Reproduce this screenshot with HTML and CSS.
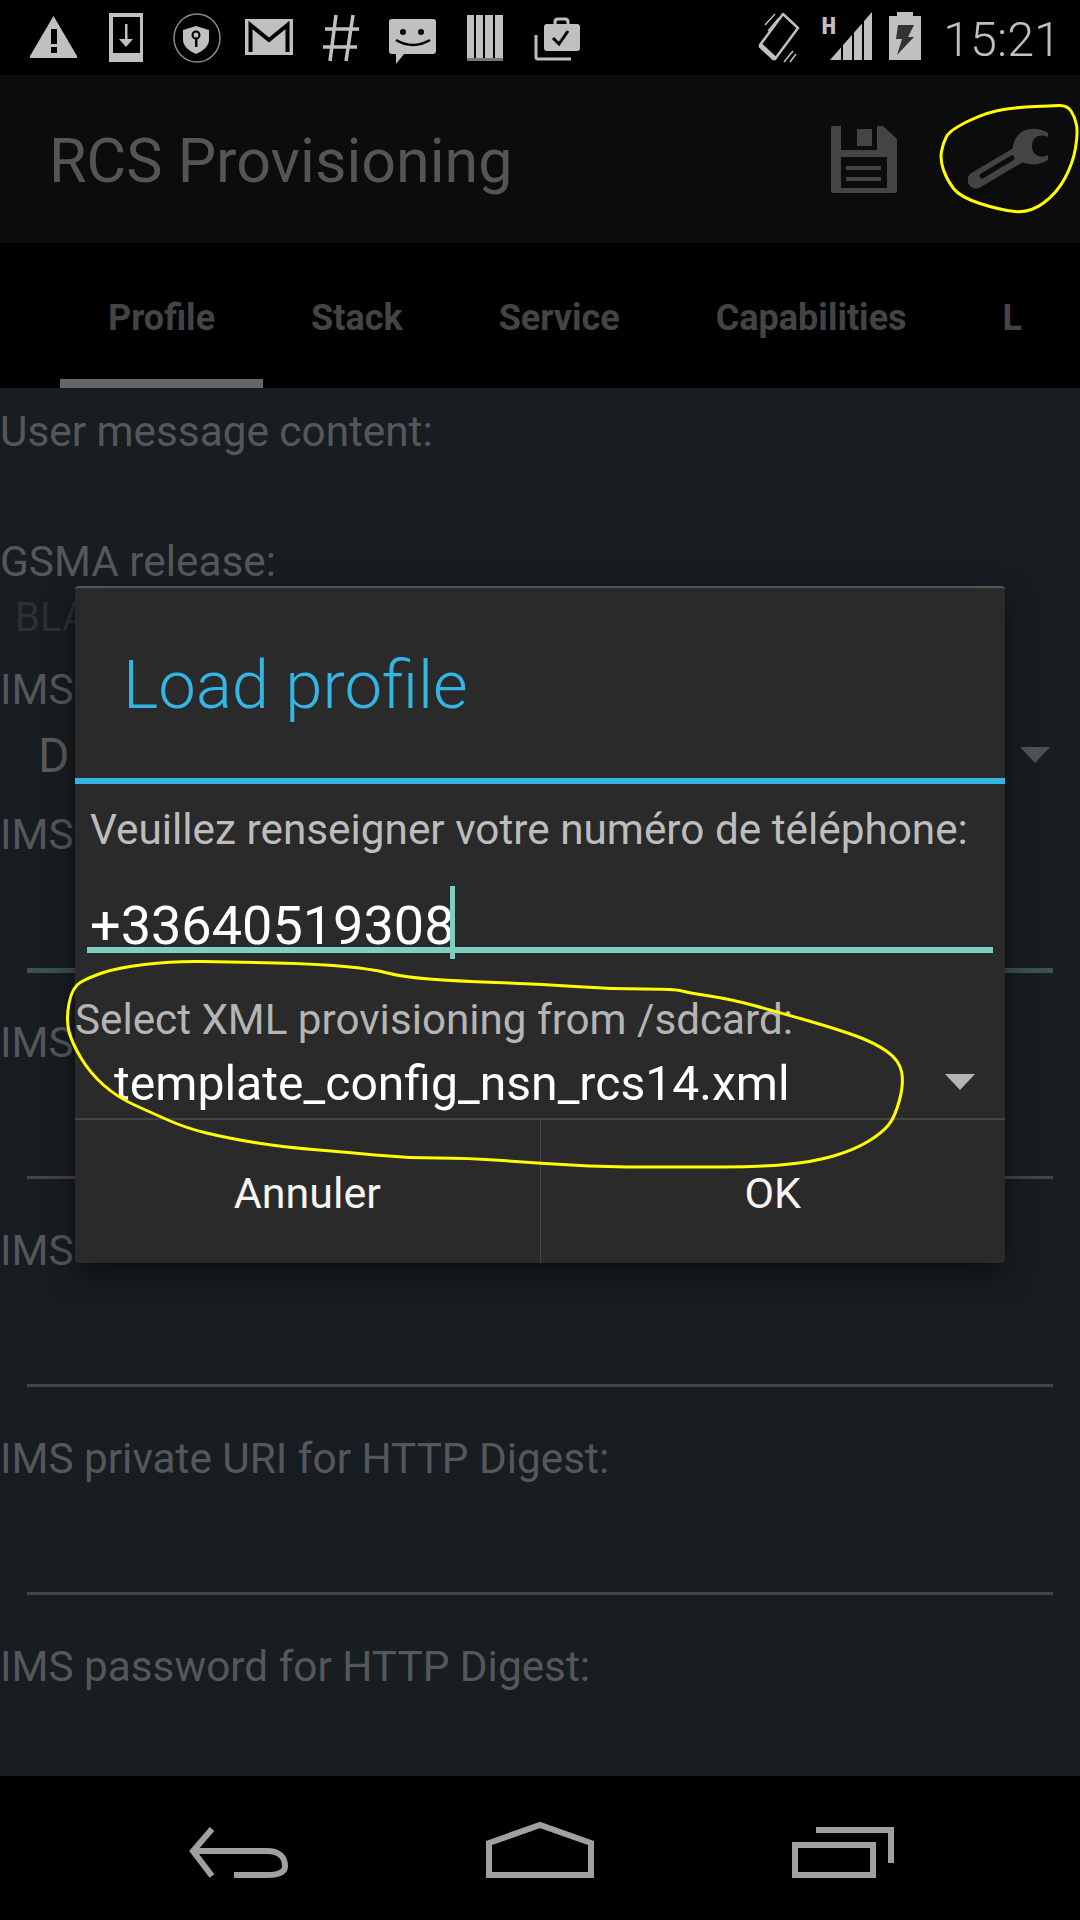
FILE: index.html
```html
<!DOCTYPE html>
<html>
  <head>
    <title>RCS Provisioning</title>
    <link rel="stylesheet" href="styles.css">
  </head>
  <body>
    <div class="screen">
      <div class="statusbar">
        <div class="notifs">
          <svg class="slot" viewBox="17 0 72 76"><polygon class="g" points="53.5,16 77,56 77,58 30,58 30,56"/><rect class="k" x="51" y="29" width="6" height="15"/><rect class="k" x="51" y="47" width="6" height="6"/></svg>
          <svg class="slot" viewBox="89 0 72 76"><rect class="g" x="109" y="13" width="34" height="49"/><rect class="k" x="113" y="17" width="27" height="36"/><rect class="g" x="125" y="24" width="2.5" height="18"/><polygon class="g" points="119,39 133,39 126,47"/></svg>
          <svg class="slot" viewBox="162 0 72 76"><ellipse cx="198" cy="38" rx="23" ry="24" fill="none" stroke="#8a8a8a" stroke-width="1.5"/><path class="g" d="M197 26 L210 30 V40 C210 46 204 51 197 54 C190 51 184 46 184 40 V30 Z"/><circle cx="197" cy="35" r="3.5" fill="none" stroke="#000" stroke-width="2"/><rect class="k" x="196" y="38" width="2.5" height="9"/></svg>
          <svg class="slot" viewBox="234 0 72 76"><rect class="g" x="246" y="19" width="48" height="36"/><path d="M251.5 52 V25 L270 40 L288.500 25 V52" fill="none" stroke="#000" stroke-width="4"/></svg>
          <svg class="slot" viewBox="306 0 72 76"><path d="M337 15 L331 61 M354 15 L347 61 M326 29 H360 M324 47 H358" fill="none" stroke="#c0c0c0" stroke-width="3.500"/></svg>
          <svg class="slot" viewBox="378 0 72 76"><path class="g" d="M393 19 H434 Q437 19 437 22 V51 Q437 54 434 54 H405 L397 64 V54 H393 Q390 54 390 51 V22 Q390 19 393 19 Z"/><circle class="k" cx="404" cy="32" r="3"/><circle class="k" cx="422" cy="32" r="3"/><path d="M397 40 Q414 50 431 40" fill="none" stroke="#000" stroke-width="2.500"/></svg>
          <svg class="slot" viewBox="450 0 72 76"><rect class="g" x="468" y="15" width="7" height="46"/><rect class="g" x="477" y="15" width="7" height="46"/><rect class="g" x="486" y="15" width="8" height="46"/><rect class="g" x="496" y="15" width="8" height="46"/><rect x="468" y="58" width="36" height="3" fill="#777"/></svg>
          <svg class="slot" viewBox="522 0 72 76"><path d="M537 35 V57 Q537 59 539 59 H572" fill="none" stroke="#c0c0c0" stroke-width="3"/><path d="M556 24 V22 Q556 19 559 19 H566 Q569 19 569 22 V24" fill="none" stroke="#c0c0c0" stroke-width="3"/><rect class="g" x="545" y="24" width="36" height="27" rx="3"/><path d="M554 38 L560 44 L569 31" fill="none" stroke="#000" stroke-width="3"/></svg>
        </div>
        <div class="sysicons">
          <svg class="vibrate" viewBox="758 0 42 76"><path d="M783 14 L798 28 L775 59 L760 45 Z" fill="none" stroke="#c0c0c0" stroke-width="2.500" stroke-linejoin="round"/><path d="M760 45 L775 59" stroke="#c0c0c0" stroke-width="5"/><path d="M765 25 L775 14 M768 31 L779 18 M784 62 L793 51 M790 62 L796 54" stroke="#c0c0c0" stroke-width="1.500"/></svg>
          <svg class="signal" viewBox="825 0 50 76"><text class="net" x="824" y="34">H</text><polygon class="g" points="833,60 875,12 875,60"/><rect class="k" x="844" y="10" width="2" height="52"/><rect class="k" x="855" y="10" width="2" height="52"/><rect class="k" x="865" y="10" width="2" height="52"/></svg>
          <svg class="battery" viewBox="892 0 32 76"><rect class="g" x="900" y="12" width="16" height="5"/><rect class="g" x="892" y="16" width="32" height="44"/><polygon points="901,25 917,25 911,37 917,37 900,55 905,39 899,39" fill="#333"/></svg>
          <span class="clock">15:21</span>
        </div>
      </div>

      <div class="actionbar">
        <span class="apptitle">RCS Provisioning</span>
        <svg class="save" viewBox="831 126 66 67"><path class="ic" d="M833 126 H883 L897 139 V191 Q897 193 895 193 H833 Q831 193 831 191 V128 Q831 126 833 126 Z"/><path class="bar" d="M841 126 H877 V150 H841 Z"/><rect class="ic" x="857" y="129" width="15" height="17"/><rect class="bar" x="841" y="157" width="46" height="31"/><rect class="ic" x="846" y="166" width="35" height="4"/><rect class="ic" x="846" y="177" width="35" height="4"/></svg>
        <svg class="wrench" viewBox="968 126 80 68"><path class="ic" d="M1048 134 C1036 127 1022 129 1016 139 C1012 146 1012 152 1014 157 L1022 163 C1030 167 1040 166 1048 161 L1048 156 C1040 160 1032 156 1032 147 C1032 138 1040 134 1048 138 Z"/><path d="M976 181 L1020 155" stroke="#444" stroke-width="17" stroke-linecap="round"/><path d="M982 177 L1012 159" stroke="#0c0c0c" stroke-width="5" stroke-linecap="round"/></svg>
      </div>

      <div class="tabs">
        <div class="tab active">Profile</div>
        <div class="tab">Stack</div>
        <div class="tab">Service</div>
        <div class="tab">Capabilities</div>
        <div class="tab">L</div>
      </div>

      <div class="content">
        <div class="label first">User message content:</div>
        <div class="label gsma">GSMA release:</div>
        <div class="spinner-bg small">BLA</div>
        <div class="label ims">IMS</div>
        <div class="spinner-bg">
          <span>D</span>
          <span class="arrow dim"></span>
        </div>
        <div class="label field-label">IMS</div>
        <div class="line focused"></div>
        <div class="label">IMS</div>
        <div class="line"></div>
        <div class="label">IMS</div>
        <div class="line"></div>
        <div class="label">IMS private URI for HTTP Digest:</div>
        <div class="line"></div>
        <div class="label">IMS password for HTTP Digest:</div>
      </div>

      <div class="navbar">
        <svg class="back" viewBox="190 1776 99 144"><path d="M213 1829 L194 1851 L213 1876 M194 1851 H268 C279 1851 286 1856 286 1866 C286 1873 279 1875 268 1875 H235" fill="none" stroke="#a0a0a0" stroke-width="6"/></svg>
        <svg class="home" viewBox="486 1776 108 144"><path d="M489 1875 V1843 L540 1825 L591 1843 V1875 Z" fill="none" stroke="#a0a0a0" stroke-width="6"/></svg>
        <svg class="recent" viewBox="792 1776 102 144"><rect x="795" y="1845" width="78" height="30" fill="none" stroke="#a0a0a0" stroke-width="6"/><path d="M816 1830 H891 V1863" fill="none" stroke="#a0a0a0" stroke-width="6"/></svg>
      </div>

      <div class="dialog">
        <div class="dialog-title">Load profile</div>
        <div class="dialog-msg">Veuillez renseigner votre numéro de téléphone:</div>
        <div class="phone">
          +33640519308
          <span class="cursor"></span>
        </div>
        <div class="select-label">Select XML provisioning from /sdcard:</div>
        <div class="select">
          <span class="select-value">template_config_nsn_rcs14.xml</span>
          <span class="arrow"></span>
        </div>
        <div class="buttons">
          <div class="btn">Annuler</div>
          <div class="btn">OK</div>
        </div>
      </div>

      <svg class="scribble" viewBox="0 0 1080 1920">
        <path d="M1035 106.500 Q1050 106 1058.500 105.500 Q1067 105 1071 111 Q1075 117 1076.500 125 Q1078 133 1075.500 148 Q1073 163 1065 178 Q1057 193 1043.500 203 Q1030 213 1015 211.500 Q1000 210 980 203.500 Q960 197 953.500 188.500 Q947 180 943.500 170 Q940 160 941.500 151.500 Q943 143 946.500 136.500 Q950 130 968.500 121 Q987 112 1003.500 109.500 Q1020 107 1035 106.500 Z"/>
        <path d="M69 1003.500 Q72 987 81 982 Q90 977 103.500 972.500 Q117 968 144.500 964.500 Q172 961 203 961.500 Q234 962 275.500 963 Q317 964 344.500 966.500 Q372 969 387.500 973 Q403 977 429 979 Q455 981 496 982.500 Q537 984 575 986.500 Q613 989 644 989 Q675 989 682 991 Q689 993 709.500 996 Q730 999 754 1005.500 Q778 1012 809 1021 Q840 1030 857.500 1036.500 Q875 1043 887 1051.500 Q899 1060 901.500 1071.500 Q904 1083 899.500 1100 Q895 1117 888.500 1125 Q882 1133 868 1141.500 Q854 1150 833.500 1156 Q813 1162 785.500 1164.500 Q758 1167 723.500 1167 Q689 1167 647.500 1167 Q606 1167 571.500 1165 Q537 1163 502.500 1160.500 Q468 1158 437 1158 Q406 1158 375 1155 Q344 1152 313 1149.500 Q282 1147 254.500 1142.500 Q227 1138 206.500 1133 Q186 1128 169 1120.500 Q152 1113 134.500 1105 Q117 1097 103.500 1085 Q90 1073 81 1058 Q72 1043 69 1031.500 Q66 1020 69 1003.500 Z"/>
      </svg>
    </div>
  </body>
</html>
```

FILE: styles.css
```css
* {
  box-sizing: border-box;
}

body {
  margin: 0;
  font-family: Roboto, "Noto Sans", sans-serif;
  background-color: #000;
}

svg {
  display: block;
  flex: none;
}

.g {
  fill: #c0c0c0;
}

.k {
  fill: #000;
}

.ic {
  fill: #444;
}

.bar {
  fill: #0c0c0c;
}

.screen {
  position: relative;
  width: 1080px;
  height: 1920px;
  overflow: hidden;
  display: flex;
  flex-direction: column;
}

/* status bar */
.statusbar {
  height: 75px;
  flex: none;
  display: flex;
  background-color: #000;
}

.notifs {
  display: flex;
  padding-left: 17px;
}

.slot {
  width: 72px;
  height: 76px;
}

.sysicons {
  margin-left: auto;
  padding-right: 19px;
  display: flex;
  align-items: flex-start;
}

.vibrate {
  width: 42px;
  height: 76px;
}

.signal {
  width: 50px;
  height: 76px;
  margin-left: 22px;
}

.net {
  font-family: "Liberation Mono", monospace;
  font-weight: bold;
  font-size: 26px;
  fill: #c0c0c0;
}

.battery {
  width: 32px;
  height: 76px;
  margin-left: 17px;
}

.clock {
  margin-left: 22px;
  color: #c0c0c0;
  font-size: 48.5px;
  font-weight: 300;
  line-height: 80px;
}

/* action bar */
.actionbar {
  height: 168px;
  flex: none;
  display: flex;
  align-items: center;
  padding-left: 49px;
  background-color: #0c0c0c;
}

.apptitle {
  padding-top: 3px;
  color: #555;
  font-size: 61px;
}

.save {
  width: 66px;
  height: 67px;
  margin-left: auto;
}

.wrench {
  width: 80px;
  height: 68px;
  margin-left: 71px;
  margin-right: 32px;
}

/* tabs */
.tabs {
  height: 145px;
  flex: none;
  display: flex;
  padding-left: 60px;
  overflow: hidden;
  background-color: #000;
}

.tab {
  flex: none;
  height: 145px;
  padding: 13px 48px 0;
  color: #444;
  font-size: 36px;
  font-weight: bold;
  line-height: 125px;
  white-space: nowrap;
}

.tab.active {
  border-bottom: 9px solid #666;
}

/* dimmed form behind the dialog */
.content {
  flex: 1;
  min-height: 0;
  overflow: hidden;
  background-color: #181d21;
}

.label {
  height: 50px;
  color: #55585b;
  font-size: 42.3px;
  line-height: 50px;
  white-space: nowrap;
}

.label.first {
  margin-top: 19px;
}

.label.gsma {
  margin-top: 80px;
}

.label.ims {
  margin-top: 23px;
}

.label.field-label {
  margin-top: 25px;
}

.spinner-bg {
  height: 60px;
  margin-top: 10px;
  padding: 0 30px 0 38px;
  display: flex;
  align-items: center;
  justify-content: space-between;
  color: #5a5a5a;
  font-size: 48px;
}

.spinner-bg.small {
  height: 50px;
  margin-top: 5px;
  padding-left: 15px;
  color: #2c3136;
  font-size: 40px;
}

.line {
  height: 3px;
  margin: 108px 27px 47px;
  background-color: #444;
}

.line.focused {
  height: 5px;
  margin-bottom: 45px;
  background-color: #39544f;
}

.arrow {
  width: 0;
  height: 0;
  border-left: 15px solid transparent;
  border-right: 15px solid transparent;
  border-top: 16px solid #b5b5b5;
}

.arrow.dim {
  border-top-color: #4e5256;
}

/* nav bar */
.navbar {
  height: 144px;
  flex: none;
  display: flex;
  justify-content: center;
  gap: 198px;
  padding-left: 3px;
  background-color: #000;
}

.back {
  width: 99px;
  height: 144px;
}

.home {
  width: 108px;
  height: 144px;
}

.recent {
  width: 102px;
  height: 144px;
}

/* dialog */
.dialog {
  position: absolute;
  top: 586px;
  left: 75px;
  width: 930px;
  height: 677px;
  display: flex;
  flex-direction: column;
  border-top: 2px solid #555;
  border-radius: 4px;
  background-color: #2a2a2a;
  box-shadow: 0 10px 30px rgba(0, 0, 0, 0.5);
}

.dialog-title {
  height: 196px;
  flex: none;
  padding: 25px 0 0 48px;
  border-bottom: 6px solid #33b5e5;
  color: #33b5e5;
  font-size: 67px;
  font-weight: 300;
  line-height: 144px;
}

.dialog-msg {
  margin-top: 21px;
  padding-left: 15px;
  color: #bdbdbd;
  font-size: 42.3px;
  line-height: 50px;
  white-space: nowrap;
}

.phone {
  position: relative;
  height: 98px;
  margin: 0 12px;
  padding: 51px 0 0 3px;
  border-bottom: 6px solid #82cdc2;
  color: #fff;
  font-size: 54px;
  line-height: 40px;
}

.cursor {
  position: absolute;
  left: 363px;
  top: 31px;
  width: 5px;
  height: 73px;
  background-color: #82cdc2;
}

.select-label {
  margin-top: 42px;
  color: #b5b5b5;
  font-size: 42.2px;
  line-height: 50px;
  white-space: nowrap;
}

.select {
  height: 73px;
  padding: 0 30px 0 39px;
  display: flex;
  align-items: center;
  justify-content: space-between;
  color: #fff;
  font-size: 48.1px;
}

.select-value {
  margin-top: 4px;
}

.buttons {
  flex: 1;
  display: flex;
  border-top: 2px solid #444;
}

.btn {
  flex: 1;
  display: flex;
  align-items: center;
  justify-content: center;
  padding-top: 3px;
  color: #f5f5f5;
  font-size: 43px;
}

.btn + .btn {
  border-left: 1px solid #444;
}

/* yellow pen marks on the screenshot */
.scribble {
  position: absolute;
  top: 0;
  left: 0;
  width: 1080px;
  height: 1920px;
  pointer-events: none;
}

.scribble path {
  fill: none;
  stroke: #ffff00;
  stroke-width: 3;
  stroke-linejoin: round;
}
```
